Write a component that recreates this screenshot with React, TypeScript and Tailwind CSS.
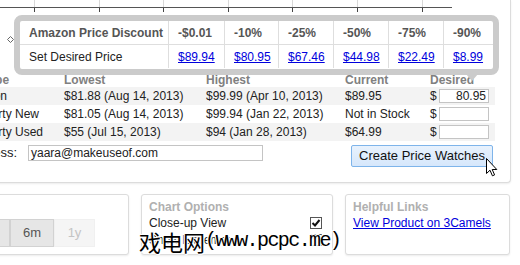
import React from 'react';

const ticks = [34, 99, 163, 228, 292, 357, 422];

const discounts = [
  { label: '-$0.01', price: '$89.94' },
  { label: '-10%', price: '$80.95' },
  { label: '-25%', price: '$67.46' },
  { label: '-50%', price: '$44.98' },
  { label: '-75%', price: '$22.49' },
  { label: '-90%', price: '$8.99' },
];

const colWidths = ['w-[56px]', 'w-[54px]', 'w-[55px]', 'w-[55px]', 'w-[55px]', 'w-[48px]'];

const rows = [
  { type: 'Amazon', lowest: '$81.88 (Aug 14, 2013)', highest: '$99.99 (Apr 10, 2013)', current: '$89.95', desired: '80.95', shaded: true },
  { type: '3rd Party New', lowest: '$81.05 (Aug 14, 2013)', highest: '$99.94 (Jan 22, 2013)', current: 'Not in Stock', desired: '', shaded: false },
  { type: '3rd Party Used', lowest: '$55 (Jul 15, 2013)', highest: '$94 (Jan 28, 2013)', current: '$64.99', desired: '', shaded: true },
];

const Checkbox: React.FC<{ checked?: boolean }> = ({ checked }) => (
  <span className="w-[12px] h-[12px] border border-[#555] bg-white flex items-center justify-center shrink-0">
    {checked && (
      <svg width="10" height="10" viewBox="0 0 10 10">
        <path d="M1.5 5 L4 7.5 L8.5 2" fill="none" stroke="#111" strokeWidth="2" />
      </svg>
    )}
  </span>
);

const App: React.FC = () => {
  return (
    <div className="w-[520px] h-[265px] bg-white relative overflow-hidden text-[12px] text-[#222] font-['Liberation_Sans',Arial,sans-serif]">
      {/* main panel */}
      <div className="ml-[-45px] w-[556px] h-[183px] border-x border-b border-[#dcdcdc] rounded-b-[4px] shadow-[0_1px_2px_rgba(0,0,0,0.08)] bg-white pl-[7px]">
        <svg width="546" height="72" className="block ml-[-7px]">
          <g transform="translate(44,0)">
            {ticks.map(x => (
              <g key={x}>
                <line x1={x + 0.5} y1="0" x2={x + 0.5} y2="7" stroke="#d8d8d8" />
                <line x1={x + 0.5} y1="8" x2={x + 0.5} y2="12" stroke="#444" />
              </g>
            ))}
            <line x1="0" y1="7.5" x2="452" y2="7.5" stroke="#555" />
            <path d="M10.5 36.5 L13.5 39.5 L10.5 42.5 L7.5 39.5 Z" fill="white" stroke="#666" />
          </g>
        </svg>

        <div className="w-[532px]">
          <div className="flex h-[15px] items-center font-bold text-[#808080]">
            <div className="w-[101px] pl-[19px]">Type</div>
            <div className="w-[142px]">Lowest</div>
            <div className="w-[139px]">Highest</div>
            <div className="w-[85px]">Current</div>
            <div className="w-[65px]">Desired</div>
          </div>
          {rows.map(r => (
            <div key={r.type} className={`flex h-[18px] items-center ${r.shaded ? 'bg-[#f3f3f3]' : 'bg-white'}`}>
              <div className="w-[101px] whitespace-nowrap">{r.type}</div>
              <div className="w-[142px] whitespace-nowrap">{r.lowest}</div>
              <div className="w-[139px] whitespace-nowrap">{r.highest}</div>
              <div className="w-[85px] whitespace-nowrap">{r.current}</div>
              <div className="w-[65px] flex items-center">
                <span className="w-[9px] self-start leading-[14px]">$</span>
                <span className="w-[50px] h-[14px] border border-[#c4c4c4] bg-white text-right pr-[2px] leading-[12px]">{r.desired}</span>
              </div>
            </div>
          ))}
        </div>

        <div className="flex items-start mt-[4px]">
          <div className="w-[54px] flex justify-end h-[16px] items-center whitespace-nowrap text-[13px]">Email Address:</div>
          <div className="ml-[11px] w-[235px] h-[16px] border border-[#c4c4c4] flex items-center pl-[2px] leading-[14px]">yaara@makeuseof.com</div>
          <button className="ml-[88px] w-[142px] h-[22px] border border-[#7eb4ea] bg-gradient-to-b from-[#e8f2fd] to-[#d6e7fb] text-[13px] text-[#111] rounded-[2px] flex items-center justify-center">
            Create Price Watches
          </button>
        </div>
      </div>

      {/* bottom cards */}
      <div className="flex gap-3 mt-[11px] ml-[-20px]">
        <div className="w-[149px] h-[61px] border border-[#dcdcdc] rounded-[3px] shadow-[0_1px_2px_rgba(0,0,0,0.08)] bg-white pt-[24px]">
          <div className="flex ml-[-13px] text-[13px]">
            <div className="w-[42px] h-[28px] bg-[#e6e6e6] border border-[#d2d2d2] text-[#555] flex items-center justify-center">3m</div>
            <div className="w-[44px] h-[28px] bg-[#e6e6e6] border border-[#d2d2d2] text-[#555] flex items-center justify-center">6m</div>
            <div className="w-[41px] h-[28px] bg-[#f5f5f5] border border-[#f0f0f0] text-[#c4c4c4] flex items-center justify-center">1y</div>
          </div>
        </div>
        <div className="w-[192px] h-[61px] border border-[#dcdcdc] rounded-[3px] shadow-[0_1px_2px_rgba(0,0,0,0.08)] bg-white pl-[7px] pr-[10px] pt-[5px] leading-[14px]">
          <div className="font-bold text-[#b0b0b0]">Chart Options</div>
          <div className="flex justify-between items-center mt-[2px]">
            <span>Close-up View</span>
            <Checkbox checked />
          </div>
          <div className="flex justify-between items-center mt-[3px]">
            <span>Show Extremes</span>
            <Checkbox />
          </div>
        </div>
        <div className="w-[165px] h-[61px] border border-[#dcdcdc] rounded-[3px] shadow-[0_1px_2px_rgba(0,0,0,0.08)] bg-white pl-[7px] pt-[5px] leading-[14px]">
          <div className="font-bold text-[#b0b0b0]">Helpful Links</div>
          <a className="block mt-[2px] text-[#0000dd] underline">View Product on 3Camels</a>
        </div>
      </div>

      {/* discount popup */}
      <div className="absolute left-[14px] top-[15px] w-[485px] h-[60px] border-[6px] border-[#cbcbcb] rounded-[8px] bg-white">
        <div className="flex h-[24px] border-b border-[#dedede] font-bold text-[#555]">
          <div className="w-[149px] pl-[9px] flex items-center border-r border-[#dedede]">Amazon Price Discount</div>
          {discounts.map((d, i) => (
            <div key={d.label} className={`${colWidths[i]} pl-[9px] flex items-center ${i < 5 ? 'border-r border-[#dedede]' : ''}`}>{d.label}</div>
          ))}
        </div>
        <div className="flex h-[23px]">
          <div className="w-[149px] pl-[9px] flex items-center border-r border-[#dedede]">Set Desired Price</div>
          {discounts.map((d, i) => (
            <div key={d.price} className={`${colWidths[i]} pl-[9px] flex items-center ${i < 5 ? 'border-r border-[#dedede]' : ''}`}>
              <a className="text-[#0000dd] underline">{d.price}</a>
            </div>
          ))}
        </div>
        <div className="absolute left-[446px] top-[53px] w-0 h-0 border-l-[6px] border-r-[6px] border-t-[7px] border-l-transparent border-r-transparent border-t-[#cbcbcb]" />
      </div>

      {/* watermark */}
      <div className="absolute left-[139px] top-[230px] flex items-center whitespace-nowrap text-black [text-shadow:1px_0_0_#fff,-1px_0_0_#fff,0_1px_0_#fff,0_-1px_0_#fff,1px_1px_0_#fff,-1px_-1px_0_#fff]">
        <span className="text-[22px] leading-[22px] font-['Noto_Sans_CJK_SC',sans-serif]">戏电网</span>
        <span className="text-[20px] leading-[22px] tracking-[-1.6px] font-['Liberation_Mono',monospace]">(www.pcpc.me)</span>
      </div>

      {/* mouse cursor */}
      <svg width="12" height="19" viewBox="0 0 12 19" className="absolute left-[486px] top-[158px]">
        <path d="M0.5 0.5 L0.5 15.5 L4 12.2 L6.4 17.8 L8.6 16.9 L6.2 11.5 L10.8 11.5 Z" fill="white" stroke="black" strokeWidth="1" strokeLinejoin="round" />
      </svg>
    </div>
  );
};

export default App;
